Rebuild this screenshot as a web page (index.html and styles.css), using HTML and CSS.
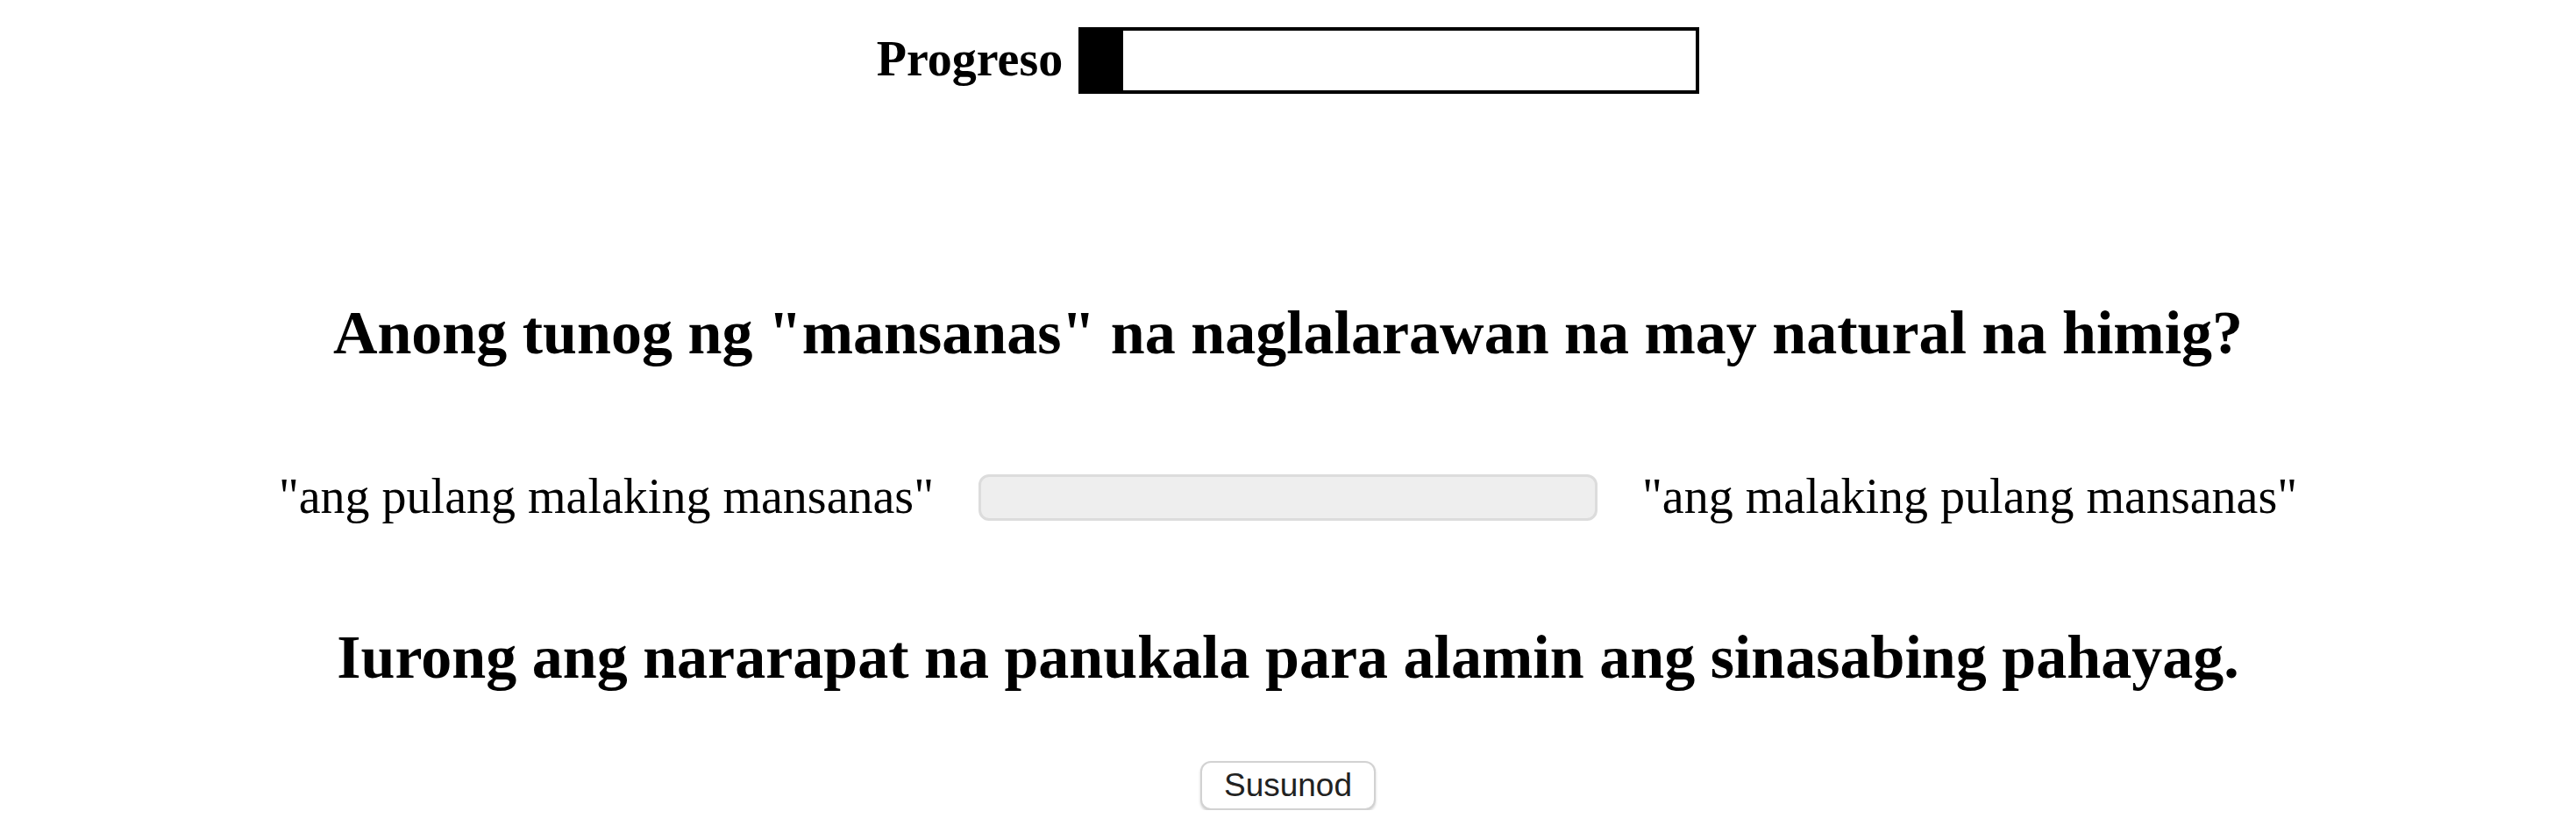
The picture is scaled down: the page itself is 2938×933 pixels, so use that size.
FILE: index.html
```html
<!DOCTYPE html>
<html lang="tl">
<head>
<meta charset="utf-8">
<title>Progreso</title>
<link rel="stylesheet" href="styles.css">
</head>
<body>
<main class="page">
  <div class="progress-row">
    <span class="progress-label">Progreso</span>
    <div class="progress-bar"><div class="progress-fill" style="width: 47px"></div></div>
  </div>
  <h1 class="question">Anong tunog ng "mansanas" na naglalarawan na may natural na himig?</h1>
  <div class="scale-row">
    <span class="scale-option">"ang pulang malaking mansanas"</span>
    <div class="scale-track"></div>
    <span class="scale-option">"ang malaking pulang mansanas"</span>
  </div>
  <h1 class="instruction">Iurong ang nararapat na panukala para alamin ang sinasabing pahayag.</h1>
  <button class="next-btn" type="button">Susunod</button>
</main>
</body>
</html>
```
FILE: styles.css
```css
html, body {
  margin: 0;
  padding: 0;
  background: #fff;
}
body {
  font-family: "Liberation Serif", "Times New Roman", serif;
  color: #000;
}
.page {
  display: flex;
  flex-direction: column;
  align-items: center;
  padding-top: 31px;
}
.progress-row {
  display: flex;
  align-items: center;
  gap: 18px;
  height: 75px;
}
.progress-label {
  font-weight: bold;
  font-size: 56px;
  line-height: 61px;
  position: relative;
  top: -1px;
}
.progress-bar {
  box-sizing: border-box;
  width: 708px;
  height: 76px;
  border: 4px solid #000;
  background: #fff;
}
.progress-fill {
  height: 100%;
  background: #000;
}
.question, .instruction {
  margin: 0;
  font-size: 70px;
  font-weight: bold;
  line-height: 80px;
  text-align: center;
}
.question {
  margin-top: 234px;
}
.scale-row {
  display: flex;
  align-items: center;
  gap: 51px;
  margin-top: 114px;
  height: 64px;
}
.scale-option {
  font-size: 56px;
  line-height: 64px;
  white-space: nowrap;
}
.scale-track {
  box-sizing: border-box;
  width: 706px;
  height: 53px;
  margin-top: 3px;
  background: #eeeeee;
  border: 3px solid #dcdcdc;
  border-radius: 12px;
}
.instruction {
  margin-top: 112px;
}
.next-btn {
  margin-top: 78px;
  box-sizing: border-box;
  width: 200px;
  height: 56px;
  padding: 0;
  font-family: "Liberation Sans", Arial, sans-serif;
  font-size: 37px;
  color: #222;
  background: #fff;
  border: 2px solid #d2d2d2;
  border-radius: 12px;
  box-shadow: 0 2px 3px rgba(0,0,0,0.18);
}
```
